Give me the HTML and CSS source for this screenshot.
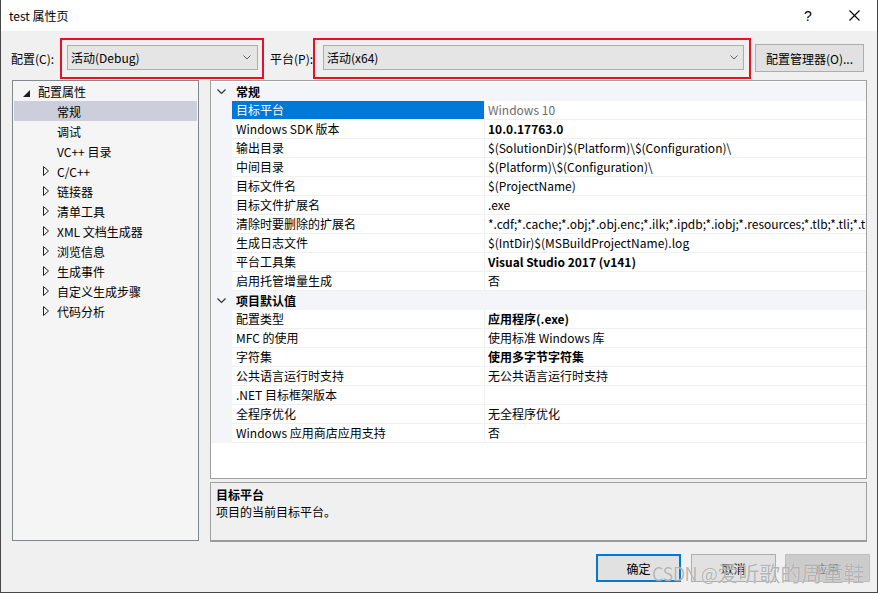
FILE: index.html
```html
<!DOCTYPE html>
<html lang="zh-CN">
<head>
    <meta charset="UTF-8">
    <title>test 属性页</title>
    <link rel="stylesheet" href="styles.css">
</head>
<body>
    <div class="window">
        <div class="titlebar">
            <span class="title">test 属性页</span>
            <span class="caption-btn help">?</span>
            <span class="caption-btn close">
                <svg width="11" height="11" viewBox="0 0 11 11"><path d="M0.5 0.5 L10.5 10.5 M10.5 0.5 L0.5 10.5" stroke="#000" stroke-width="1.1" fill="none"/></svg>
            </span>
        </div>

        <div class="config-row">
            <span class="cfg-label">配置(C):</span>
            <div class="mark mark-config">
                <div class="combo combo-config">
                    <span>活动(Debug)</span>
                    <svg width="8" height="5" viewBox="0 0 8 5"><path d="M0.5 0.5 L4 4 L7.5 0.5" stroke="#606060" fill="none"/></svg>
                </div>
            </div>
            <span class="cfg-label plat-label">平台(P):</span>
            <div class="mark mark-platform">
                <div class="combo combo-platform">
                    <span>活动(x64)</span>
                    <svg width="8" height="5" viewBox="0 0 8 5"><path d="M0.5 0.5 L4 4 L7.5 0.5" stroke="#606060" fill="none"/></svg>
                </div>
            </div>
            <button class="btn btn-manager">配置管理器(O)...</button>
        </div>

        <div class="main">
            <ul class="tree">
                <li class="node root"><span class="arrow"><svg width="7" height="7" viewBox="0 0 7 7"><polygon points="7,0 7,7 0,7" fill="#1e1e1e"/></svg></span>配置属性</li>
                <li class="node child selected"><span class="arrow"></span>常规</li>
                <li class="node child"><span class="arrow"></span>调试</li>
                <li class="node child"><span class="arrow"></span>VC++ 目录</li>
                <li class="node child"><span class="arrow"><svg width="6" height="10" viewBox="0 0 6 10"><polygon points="0.5,0.5 5.5,5 0.5,9.5" fill="none" stroke="#1e1e1e"/></svg></span>C/C++</li>
                <li class="node child"><span class="arrow"><svg width="6" height="10" viewBox="0 0 6 10"><polygon points="0.5,0.5 5.5,5 0.5,9.5" fill="none" stroke="#1e1e1e"/></svg></span>链接器</li>
                <li class="node child"><span class="arrow"><svg width="6" height="10" viewBox="0 0 6 10"><polygon points="0.5,0.5 5.5,5 0.5,9.5" fill="none" stroke="#1e1e1e"/></svg></span>清单工具</li>
                <li class="node child"><span class="arrow"><svg width="6" height="10" viewBox="0 0 6 10"><polygon points="0.5,0.5 5.5,5 0.5,9.5" fill="none" stroke="#1e1e1e"/></svg></span>XML 文档生成器</li>
                <li class="node child"><span class="arrow"><svg width="6" height="10" viewBox="0 0 6 10"><polygon points="0.5,0.5 5.5,5 0.5,9.5" fill="none" stroke="#1e1e1e"/></svg></span>浏览信息</li>
                <li class="node child"><span class="arrow"><svg width="6" height="10" viewBox="0 0 6 10"><polygon points="0.5,0.5 5.5,5 0.5,9.5" fill="none" stroke="#1e1e1e"/></svg></span>生成事件</li>
                <li class="node child"><span class="arrow"><svg width="6" height="10" viewBox="0 0 6 10"><polygon points="0.5,0.5 5.5,5 0.5,9.5" fill="none" stroke="#1e1e1e"/></svg></span>自定义生成步骤</li>
                <li class="node child"><span class="arrow"><svg width="6" height="10" viewBox="0 0 6 10"><polygon points="0.5,0.5 5.5,5 0.5,9.5" fill="none" stroke="#1e1e1e"/></svg></span>代码分析</li>
            </ul>

            <div class="right">
                <div class="grid">
                    <div class="cat">
                        <span class="gutter"><svg width="9" height="6" viewBox="0 0 9 6"><path d="M0.5 0.5 L4.5 4.5 L8.5 0.5" stroke="#333" stroke-width="1.2" fill="none"/></svg></span>
                        <span class="cat-label">常规</span>
                    </div>
                    <div class="prop selected">
                        <span class="gutter"></span>
                        <span class="name">目标平台</span>
                        <span class="value muted">Windows 10</span>
                    </div>
                    <div class="prop">
                        <span class="gutter"></span>
                        <span class="name">Windows SDK 版本</span>
                        <span class="value bold">10.0.17763.0</span>
                    </div>
                    <div class="prop">
                        <span class="gutter"></span>
                        <span class="name">输出目录</span>
                        <span class="value">$(SolutionDir)$(Platform)\$(Configuration)\</span>
                    </div>
                    <div class="prop">
                        <span class="gutter"></span>
                        <span class="name">中间目录</span>
                        <span class="value">$(Platform)\$(Configuration)\</span>
                    </div>
                    <div class="prop">
                        <span class="gutter"></span>
                        <span class="name">目标文件名</span>
                        <span class="value">$(ProjectName)</span>
                    </div>
                    <div class="prop">
                        <span class="gutter"></span>
                        <span class="name">目标文件扩展名</span>
                        <span class="value">.exe</span>
                    </div>
                    <div class="prop">
                        <span class="gutter"></span>
                        <span class="name">清除时要删除的扩展名</span>
                        <span class="value">*.cdf;*.cache;*.obj;*.obj.enc;*.ilk;*.ipdb;*.iobj;*.resources;*.tlb;*.tli;*.t</span>
                    </div>
                    <div class="prop">
                        <span class="gutter"></span>
                        <span class="name">生成日志文件</span>
                        <span class="value">$(IntDir)$(MSBuildProjectName).log</span>
                    </div>
                    <div class="prop">
                        <span class="gutter"></span>
                        <span class="name">平台工具集</span>
                        <span class="value bold">Visual Studio 2017 (v141)</span>
                    </div>
                    <div class="prop">
                        <span class="gutter"></span>
                        <span class="name">启用托管增量生成</span>
                        <span class="value">否</span>
                    </div>
                    <div class="cat">
                        <span class="gutter"><svg width="9" height="6" viewBox="0 0 9 6"><path d="M0.5 0.5 L4.5 4.5 L8.5 0.5" stroke="#333" stroke-width="1.2" fill="none"/></svg></span>
                        <span class="cat-label">项目默认值</span>
                    </div>
                    <div class="prop">
                        <span class="gutter"></span>
                        <span class="name">配置类型</span>
                        <span class="value bold">应用程序(.exe)</span>
                    </div>
                    <div class="prop">
                        <span class="gutter"></span>
                        <span class="name">MFC 的使用</span>
                        <span class="value">使用标准 Windows 库</span>
                    </div>
                    <div class="prop">
                        <span class="gutter"></span>
                        <span class="name">字符集</span>
                        <span class="value bold">使用多字节字符集</span>
                    </div>
                    <div class="prop">
                        <span class="gutter"></span>
                        <span class="name">公共语言运行时支持</span>
                        <span class="value">无公共语言运行时支持</span>
                    </div>
                    <div class="prop">
                        <span class="gutter"></span>
                        <span class="name">.NET 目标框架版本</span>
                        <span class="value"></span>
                    </div>
                    <div class="prop">
                        <span class="gutter"></span>
                        <span class="name">全程序优化</span>
                        <span class="value">无全程序优化</span>
                    </div>
                    <div class="prop">
                        <span class="gutter"></span>
                        <span class="name">Windows 应用商店应用支持</span>
                        <span class="value">否</span>
                    </div>
                </div>

                <div class="desc">
                    <div class="desc-title">目标平台</div>
                    <div class="desc-text">项目的当前目标平台。</div>
                </div>
            </div>
        </div>

        <div class="buttons">
            <button class="btn btn-dlg btn-default">确定</button>
            <button class="btn btn-dlg">取消</button>
            <button class="btn btn-dlg btn-disabled">应用</button>
        </div>

        <div class="watermark"><span class="wm-latin">CSDN @</span>爱听歌的周童鞋</div>
    </div>
</body>
</html>
```

FILE: styles.css
```css
* {
    box-sizing: border-box;
}

body {
    margin: 0;
    font-family: "Noto Sans CJK SC", "Noto Sans", sans-serif;
    font-size: 12px;
    color: #000;
    background: #fff;
}

.window {
    position: relative;
    width: 878px;
    height: 593px;
    background: #f0f0f0;
    border: 1px solid #474747;
    border-top: none;
    overflow: hidden;
}

/* title bar */
.titlebar {
    height: 31px;
    background: #fff;
    display: flex;
    align-items: center;
    padding-left: 8px;
}

.title {
    line-height: 16px;
}

.caption-btn {
    width: 46px;
    height: 31px;
    display: flex;
    align-items: center;
    justify-content: center;
}

.help {
    margin-left: auto;
    font-family: "Liberation Sans", sans-serif;
    font-size: 14px;
}

/* configuration row */
.config-row {
    height: 49px;
    display: flex;
    align-items: flex-start;
    padding: 7px 0 0 10px;
}

.cfg-label {
    width: 49px;
    flex: none;
    line-height: 41px;
    white-space: nowrap;
}

.plat-label {
    width: 43px;
    margin-left: 6px;
}

.mark {
    flex: none;
    border: 2px solid #e81123;
}

.mark-config {
    padding: 5px 4px 7px 5px;
}

.mark-platform {
    padding: 5px 5px 7px 8px;
}

.combo {
    height: 25px;
    border: 1px solid #adadad;
    background: #e5e5e5;
    display: flex;
    align-items: center;
    justify-content: space-between;
    padding: 0 6px 0 3px;
}

.combo-config {
    width: 191px;
}

.combo-platform {
    width: 421px;
    padding-right: 5px;
}

.btn {
    font-family: inherit;
    font-size: 12px;
    color: #000;
    background: #e1e1e1;
    border: 1px solid #adadad;
    padding: 0;
}

.btn-manager {
    flex: none;
    width: 109px;
    height: 28px;
    margin: 6px 0 0 4px;
}

/* main area */
.main {
    display: flex;
    gap: 11px;
    padding: 0 10px 0 11px;
}

.tree {
    flex: none;
    width: 187px;
    height: 461px;
    margin: 0;
    padding: 0 1px 1px;
    list-style: none;
    background: #f5f5f5;
    border: 1px solid #828790;
}

.node {
    height: 20px;
    display: flex;
    align-items: center;
    white-space: nowrap;
}

.node.root {
    padding-left: 9px;
}

.node.root .arrow {
    width: 15px;
    margin-top: 1px;
}

.node.child {
    padding-left: 29px;
}

.node.child .arrow {
    width: 14px;
    display: flex;
    align-items: center;
}

.node.selected {
    background: #cccedb;
}

.right {
    flex: 1;
    min-width: 0;
    display: flex;
    flex-direction: column;
    gap: 3px;
}

.grid {
    height: 399px;
    background: #fff;
    border: 1px solid #a0a0a0;
    padding-top: 1px;
    overflow: hidden;
}

.cat,
.prop {
    display: flex;
    height: 19px;
}

.cat {
    background: #f3f5f8;
}

.gutter {
    width: 21px;
    flex: none;
    background: #f3f5f8;
    display: flex;
    align-items: center;
    padding-left: 6px;
}

.cat-label {
    padding-left: 4px;
    font-weight: bold;
    line-height: 19px;
}

.name,
.value {
    height: 19px;
    line-height: 18px;
    border-bottom: 1px solid #f0f0f0;
    white-space: nowrap;
    overflow: hidden;
}

.name {
    width: 253px;
    flex: none;
    padding-left: 4px;
    border-right: 1px solid #f0f0f0;
}

.value {
    flex: 1;
    min-width: 0;
    padding-left: 3px;
}

.prop.selected .name {
    background: #0078d7;
    color: #fff;
}

.value.muted {
    color: #6d6d6d;
}

.value.bold {
    font-weight: bold;
}

.desc {
    height: 60px;
    border: 1px solid #a0a0a0;
    border-bottom: 2px solid #9a9a9a;
    padding: 3px 5px;
    line-height: 17px;
}

.desc-title {
    font-weight: bold;
}

/* dialog buttons */
.buttons {
    display: flex;
    justify-content: flex-end;
    gap: 9px;
    margin-top: 12px;
    padding-right: 7px;
}

.btn-dlg {
    width: 85px;
    height: 28px;
}

.btn-default {
    border: 2px solid #0078d7;
    margin-right: 1px;
}

.btn-disabled {
    background: #cccccc;
    border-color: #bfbfbf;
    color: #838383;
}

.watermark {
    position: absolute;
    left: 651px;
    top: 557px;
    font-size: 21px;
    line-height: 30px;
    color: rgba(110, 110, 110, 0.5);
    text-shadow: 0 0 1px #fff;
    white-space: nowrap;
    pointer-events: none;
}

.wm-latin {
    font-size: 18px;
    letter-spacing: -0.5px;
}
```
